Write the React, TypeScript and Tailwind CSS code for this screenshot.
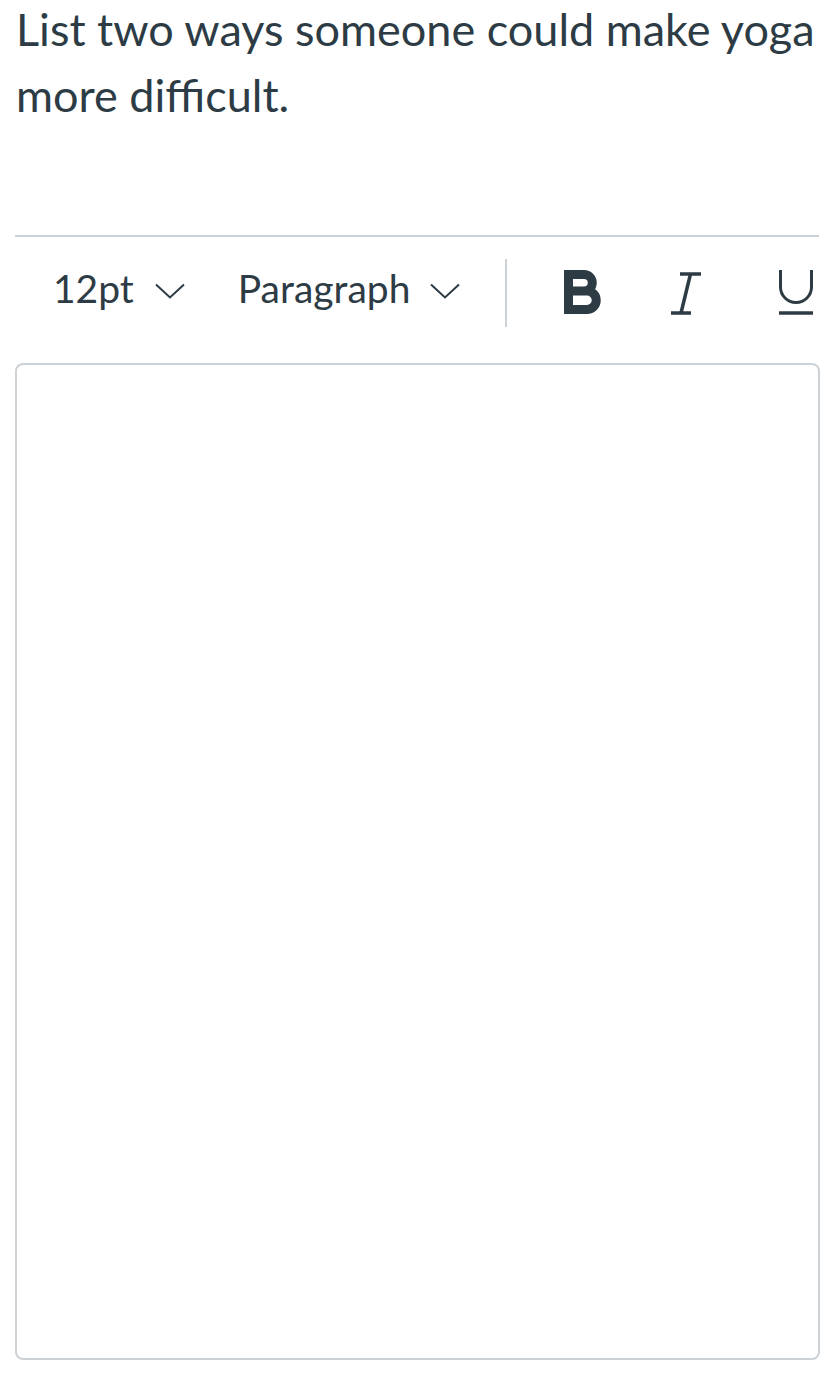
import React from "react";

const Chevron = () => (
  <svg width="30" height="16" viewBox="0 0 30 16" fill="none" className="block">
    <polyline points="1,1.5 15,14.5 29,1.5" stroke="#2d3b45" strokeWidth="2" fill="none" />
  </svg>
);

export default function App() {
  return (
    <div
      className="w-[826px] h-[1397px] bg-white text-[#2d3b45] overflow-hidden"
      style={{ fontFamily: "Lato, 'Noto Sans', sans-serif" }}
    >
      <p className="mt-[-4px] pl-[16px] text-[45px] leading-[66px]">
        List two ways someone could make yoga more difficult.
      </p>
      <div className="mt-[107px] ml-[15px] w-[804px] h-[2px] bg-[#cdd2d6]" />
      <div className="flex items-center h-[112px]">
        <span className="ml-[53px] mb-[10px] text-[39px] leading-none">12pt</span>
        <span className="ml-[21px] mb-[4px]">
          <Chevron />
        </span>
        <span className="ml-[53px] mb-[10px] text-[39px] leading-none">Paragraph</span>
        <span className="ml-[20px] mb-[4px]">
          <Chevron />
        </span>
        <span className="ml-[45px] w-[2px] h-[68px] bg-[#cdd2d6]" />
        <svg width="40" height="46" viewBox="0 0 40 46" fill="none" className="ml-[57px] block">
          <path
            d="M4.5 39.5 V4.5 H20 A8.25 8.25 0 0 1 20 21 H4.5 M4.5 21 H23 A9.25 9.25 0 0 1 23 39.5 H4.5"
            stroke="#2d3b45"
            strokeWidth="9"
            strokeLinejoin="miter"
            strokeLinecap="square"
          />
        </svg>
        <svg width="34" height="48" viewBox="0 0 34 48" fill="none" className="ml-[65px] block">
          <path d="M11 5 H32 M2 44 H22 M21.5 5 L12 44" stroke="#2d3b45" strokeWidth="3.5" />
        </svg>
        <svg width="40" height="48" viewBox="0 0 40 48" fill="none" className="ml-[74px] block">
          <path d="M3.5 1 V18 A15.5 15.5 0 0 0 34.5 18 V1" stroke="#2d3b45" strokeWidth="3" />
          <path d="M2 44 H36" stroke="#2d3b45" strokeWidth="3.5" />
        </svg>
      </div>
      <div className="mt-[14px] ml-[15px] w-[805px] h-[997px] border-2 border-[#cdd2d6] rounded-[8px]" />
    </div>
  );
}
